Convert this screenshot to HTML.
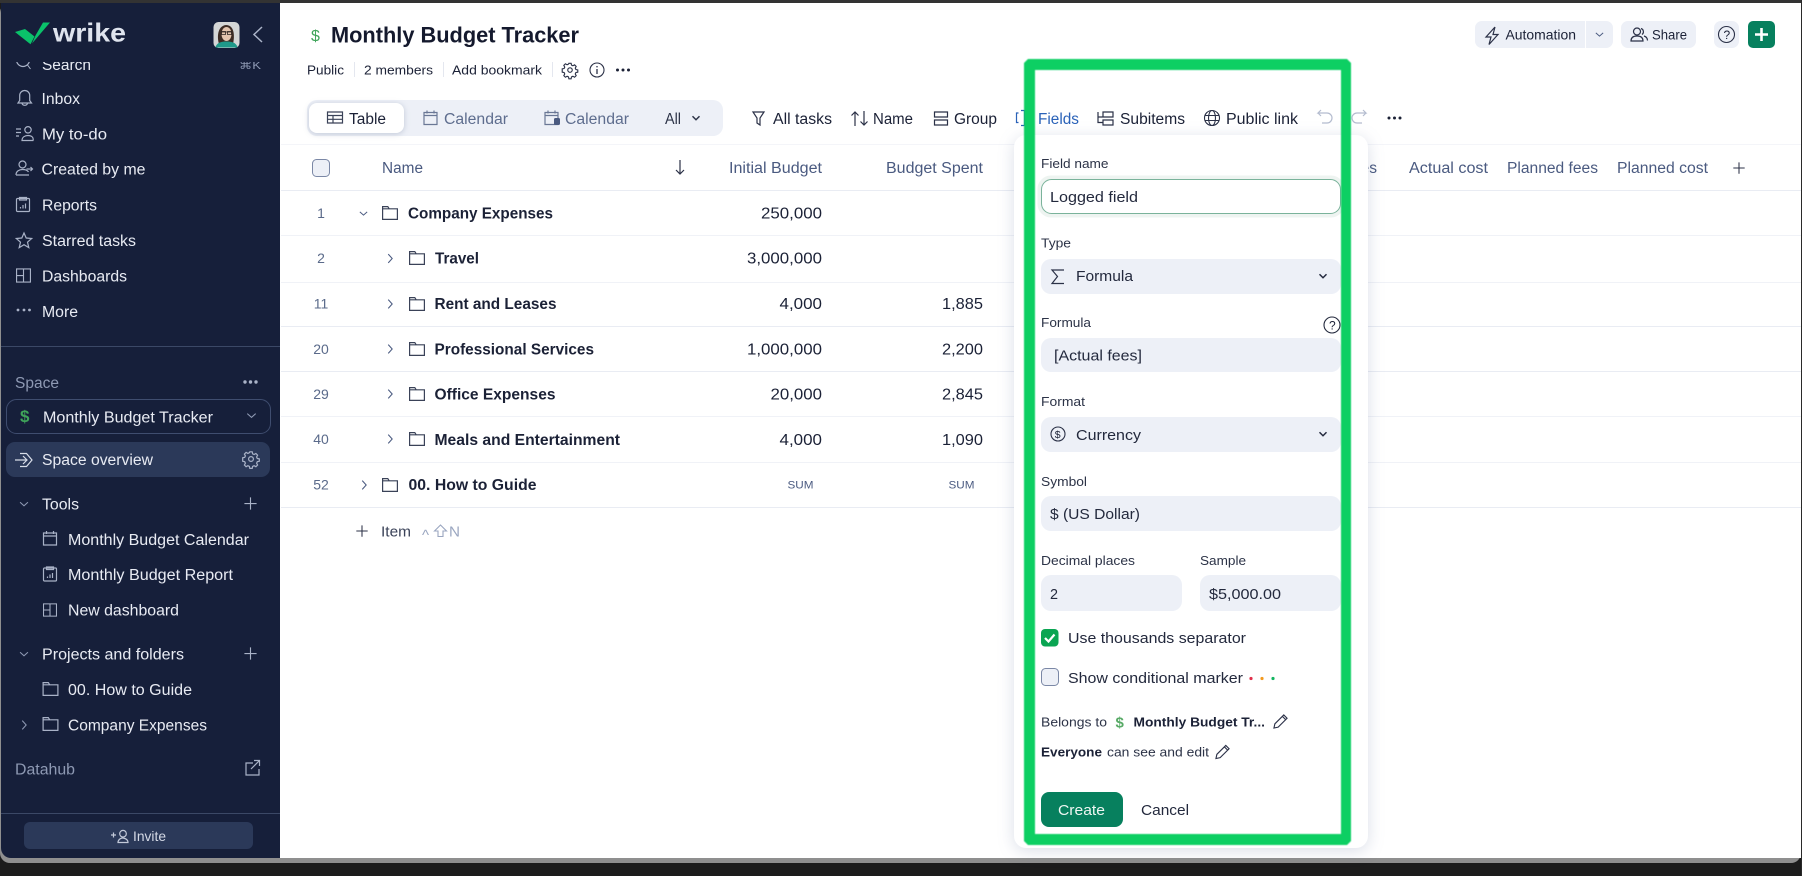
<!DOCTYPE html>
<html lang="en"><head><meta charset="utf-8"><title>Monthly Budget Tracker</title>
<style>
html,body{margin:0;padding:0;background:#1c1c1c}
svg{display:block;font-family:"Liberation Sans",sans-serif}
text{font-size:15.5px;fill:#1b2136}
.s text{fill:#e8ebf3}
.s text.m{fill:#8e99b3}
.h text{fill:#4a5a80}
.b text{font-weight:bold}
.t text{fill:#5e6d8e}
.l text{font-size:13px;fill:#2c3347}
.v text{font-size:15px;fill:#23293d}
.rn text{font-size:14px;fill:#5a6a8a}
.ic{fill:none;stroke:currentColor;stroke-width:1.2}
</style></head><body>
<svg width="1802" height="876" viewBox="0 0 1802 876" xmlns="http://www.w3.org/2000/svg">
<defs>
<symbol id="folder" viewBox="0 0 16 16" overflow="visible"><path class="ic" d="M.6 1.6h5.2l1.4 2.2h8.2v10.6H.6zM.6 3.8h6.6"/></symbol>
<symbol id="cr" viewBox="0 0 16 16"><path class="ic" d="M6 3l4.5 5L6 13"/></symbol>
<symbol id="cd" viewBox="0 0 16 16"><path class="ic" d="M3.5 6L8 10l4.5-4"/></symbol>
<symbol id="cds" viewBox="0 0 16 16"><path class="ic" style="stroke-width:1.7" d="M4 6l4 4 4-4"/></symbol>
<symbol id="plus" viewBox="0 0 16 16"><path class="ic" d="M8 1.5v13M1.5 8h13"/></symbol>
<symbol id="pencil" viewBox="0 0 16 16" overflow="visible"><path class="ic" d="M1 15l1-4.5L11.5 1l3.5 3.5L5.5 14zM10 2.5l3.500 3.500"/></symbol>
<symbol id="cal" viewBox="0 0 16 16" overflow="visible"><path class="ic" d="M1.5 2.500h13v12h-13zM1.5 5.500h13M4.500.5v3M11.500.5v3"/></symbol>
<symbol id="rep" viewBox="0 0 16 16" overflow="visible"><path class="ic" d="M2.500 2h11a1 1 0 0 1 1 1v11a1 1 0 0 1-1 1h-11a1 1 0 0 1-1-1V3a1 1 0 0 1 1-1zM4.500 1h7v2.500h-7zM5.500 12V10.500M8 12V8.500M10.500 12V7"/></symbol>
<symbol id="dash" viewBox="0 0 16 16" overflow="visible"><path class="ic" d="M.6 1h14.800v14H.6zM8 1v14M.6 8H8"/></symbol>
<symbol id="gear" viewBox="0 0 16 16" overflow="visible"><circle class="ic" cx="8" cy="8" r="2.400"/><path class="ic" d="M6.800.8h2.400l.4 2 1.500.7 1.800-1 1.700 1.700-1 1.800.7 1.500 2 .4v2.400l-2 .4-.7 1.500 1 1.800-1.700 1.700-1.800-1-1.500.7-.4 2H6.800l-.4-2-1.500-.7-1.800 1-1.700-1.700 1-1.800-.7-1.500-2-.4V6.800l2-.4.7-1.500-1-1.800 1.700-1.700 1.800 1 1.500-.7z"/></symbol>
<filter id="soft" x="-2%" y="-2%" width="104%" height="104%"><feGaussianBlur stdDeviation=".45"/></filter>
</defs>

<rect width="1802" height="876" fill="#1c1c1c"/>
<rect x="0" y="0" width="1802" height="3" fill="#333"/>
<rect x="0" y="3" width="1801" height="860" fill="#8f8f8f" rx="10"/>
<rect x="280" y="3" width="1521" height="855" fill="#fff"/>
<path d="M1 3h279v855H11a10 10 0 0 1-10-10z" fill="#161f3a"/>

<!-- SIDEBAR -->
<g class="s">
<path d="M15 32l10-3 9.500 7.500L30.500 44.300z" fill="#0ac26a"/>
<path d="M35.500 35.500L43 22.500h7L32 43.500z" fill="#0ac26a"/>
<text x="53" y="41.700" textLength="73" lengthAdjust="spacingAndGlyphs" style="font-size:26px;font-weight:bold;fill:#dfe4ee">wrike</text>
<rect x="213.500" y="22" width="26" height="26" rx="5" fill="#d4d6d6"/>
<path d="M219 44c-2-6-2-18 7-19 8 0 9 10 7 19z" fill="#3d2c24"/>
<ellipse cx="226.500" cy="34" rx="5" ry="7" fill="#e3c4ae"/>
<path d="M221 32h11M221.500 31.500h4v3h-4zM227.500 31.500h4v3h-4z" fill="none" stroke="#2c2320" stroke-width=".8"/>
<path d="M215.500 47.500c1-5 6-6 11-6s10 1 11 6z" fill="#1f9a8a"/>
<path d="M262 27l-8 7.500 8 7.500" fill="none" stroke="#aab3c8" stroke-width="1.500"/>

<svg x="0" y="62" width="280" height="20" overflow="hidden"><g transform="translate(0,-62)">
<text x="42" y="70" textLength="49" lengthAdjust="spacingAndGlyphs">Search</text>
<text x="239" y="69" textLength="22" lengthAdjust="spacingAndGlyphs" style="font-size:11px" class="m">⌘K</text>
<circle cx="23" cy="60" r="6.500" fill="none" stroke="#aab3c8" stroke-width="1.200"/><path d="M27.500 65l3 4" stroke="#aab3c8" fill="none"/>
</g></svg>

<g color="#a9b2c7">
<path class="ic" d="M18 103h13.500l-1.800-2.500v-5a5 5 0 0 0-10 0v5zM22 103.500a3 3 0 0 0 5.500 0"/>
<path class="ic" d="M16 129h5M16 132.500h5M16 136h3M22 140.500c0-3.500 3-5 6-5s6 1.500 5 5zM28 133a3.200 3.200 0 1 0 0-6.400 3.200 3.200 0 0 0 0 6.400z"/>
<path class="ic" d="M16 175c0-4 3.500-5.500 6.500-5.500s5 .8 6 2.500M16 175h13M22.500 168a3.500 3.500 0 1 0 0-7 3.500 3.500 0 0 0 0 7zM26.500 169h6m-2-2l2 2-2 2"/>
<use href="#rep" x="15" y="196.500" width="16" height="16"/>
<path class="ic" d="M24 233l2.200 5 5.500.5-4.200 3.700 1.300 5.400-4.800-2.900-4.800 2.900 1.300-5.400-4.200-3.700 5.500-.5z"/>
<use href="#dash" x="16" y="268" width="15" height="15"/>
<g fill="#a9b2c7"><circle cx="18" cy="310" r="1.400"/><circle cx="24" cy="310" r="1.400"/><circle cx="29.500" cy="310" r="1.400"/></g>
</g>
<text x="41.500" y="104" textLength="38.500" lengthAdjust="spacingAndGlyphs">Inbox</text>
<text x="42" y="139.500" textLength="65" lengthAdjust="spacingAndGlyphs">My to-do</text>
<text x="41.500" y="174.500" textLength="104" lengthAdjust="spacingAndGlyphs">Created by me</text>
<text x="42" y="210.500" textLength="55" lengthAdjust="spacingAndGlyphs">Reports</text>
<text x="42" y="246" textLength="94" lengthAdjust="spacingAndGlyphs">Starred tasks</text>
<text x="42" y="281.500" textLength="85" lengthAdjust="spacingAndGlyphs">Dashboards</text>
<text x="42" y="317" textLength="36" lengthAdjust="spacingAndGlyphs">More</text>

<rect x="1" y="346" width="279" height="1" fill="#3b4866"/>
<text class="m" x="15" y="388" textLength="44" lengthAdjust="spacingAndGlyphs">Space</text>
<g fill="#aab3c8"><circle cx="245" cy="382" r="1.700"/><circle cx="250.500" cy="382" r="1.700"/><circle cx="256" cy="382" r="1.700"/></g>

<rect x="6.500" y="399.500" width="264" height="34" rx="10" fill="none" stroke="#3f4d6f"/>
<text x="20" y="422" style="font-size:17px;font-weight:bold;fill:#3fa45a">$</text>
<text x="43" y="422.500" textLength="170" lengthAdjust="spacingAndGlyphs">Monthly Budget Tracker</text>
<use href="#cd" x="244" y="408" width="15" height="15" color="#8e99b3"/>

<rect x="6" y="442" width="264" height="35" rx="9" fill="#2b3959"/>
<path class="ic" style="color:#d8dde8" d="M15 460h12m-4-4l4 4-4 4M20 453.500h6.500L32 460l-5.500 6.500H20"/>
<text x="42" y="465" textLength="111" lengthAdjust="spacingAndGlyphs">Space overview</text>
<use href="#gear" x="243" y="451" width="16" height="16" color="#a9b2c7"/>

<use href="#cd" x="17" y="497" width="14" height="14" color="#8e99b3"/>
<text x="42" y="509.500" textLength="37" lengthAdjust="spacingAndGlyphs">Tools</text>
<use href="#plus" x="243" y="496" width="15" height="15" color="#a9b2c7"/>
<use href="#cal" x="42" y="530.500" width="16" height="16" color="#a9b2c7"/>
<text x="68" y="545" textLength="181" lengthAdjust="spacingAndGlyphs">Monthly Budget Calendar</text>
<use href="#rep" x="42" y="566" width="16" height="16" color="#a9b2c7"/>
<text x="68" y="580" textLength="165" lengthAdjust="spacingAndGlyphs">Monthly Budget Report</text>
<use href="#dash" x="43" y="603" width="14" height="14" color="#a9b2c7"/>
<text x="68" y="615.500" textLength="111" lengthAdjust="spacingAndGlyphs">New dashboard</text>
<use href="#cd" x="17" y="647" width="14" height="14" color="#8e99b3"/>
<text x="42" y="659.500" textLength="142" lengthAdjust="spacingAndGlyphs">Projects and folders</text>
<use href="#plus" x="243" y="646" width="15" height="15" color="#a9b2c7"/>
<use href="#folder" x="42.500" y="681" width="16" height="16" color="#a9b2c7"/>
<text x="68" y="695" textLength="124" lengthAdjust="spacingAndGlyphs">00. How to Guide</text>
<use href="#cr" x="17" y="718" width="14" height="14" color="#8e99b3"/>
<use href="#folder" x="42.500" y="716" width="16" height="16" color="#a9b2c7"/>
<text x="68" y="730.500" textLength="139" lengthAdjust="spacingAndGlyphs">Company Expenses</text>
<text class="m" x="15" y="774.500" textLength="60" lengthAdjust="spacingAndGlyphs">Datahub</text>
<path class="ic" style="color:#a9b2c7" d="M253 763h-7v12h13v-6M251 769l8.500-8.500m-5.500 0h5.500v5.500"/>
<rect x="1" y="813" width="279" height="1" fill="#3b4866"/>
<rect x="24" y="822" width="229" height="27" rx="6" fill="#2b3959"/>
<path class="ic" style="color:#c3cada" d="M111 835h5m-2.500-2.500v5M118 842.500c0-3 3-4.500 4.500-4.500s5.500 1 5.500 4.500zM123 837a3.300 3.300 0 1 0 0-6.600 3.300 3.300 0 0 0 0 6.600z"/>
<text x="133" y="841" textLength="33" lengthAdjust="spacingAndGlyphs" style="font-size:14px;fill:#d4d9e5">Invite</text>
</g>

<!-- HEADER -->
<text x="311" y="41" style="font-size:16px;fill:#3fa45a">$</text>
<text x="331" y="42.700" textLength="248" lengthAdjust="spacingAndGlyphs" style="font-size:22px;font-weight:bold;fill:#14192d">Monthly Budget Tracker</text>
<text x="307" y="74.500" textLength="37" lengthAdjust="spacingAndGlyphs" style="font-size:13px">Public</text>
<text x="364" y="74.500" textLength="69" lengthAdjust="spacingAndGlyphs" style="font-size:13px">2 members</text>
<text x="452" y="74.500" textLength="90" lengthAdjust="spacingAndGlyphs" style="font-size:13px">Add bookmark</text>
<g fill="#e4e7ef"><rect x="354" y="62" width="1" height="15"/><rect x="443" y="62" width="1" height="15"/><rect x="552" y="62" width="1" height="15"/></g>
<use href="#gear" x="562.500" y="62.500" width="15" height="15" color="#2b3147"/>
<circle cx="597" cy="70" r="7" fill="none" stroke="#2b3147" stroke-width="1.100"/><path d="M597 69v5M597 66v1.400" stroke="#2b3147" stroke-width="1.300"/>
<g fill="#1b2136"><circle cx="617.500" cy="70" r="1.500"/><circle cx="623" cy="70" r="1.500"/><circle cx="628.500" cy="70" r="1.500"/></g>

<rect x="1475" y="21" width="138" height="27" rx="7" fill="#edf0f7"/>
<rect x="1585" y="21" width="1" height="27" fill="#fff"/>
<path class="ic" style="color:#2b3147" d="M1495 27l-9 10h5l-2 7.500 9-10h-5l2-7.500"/>
<text x="1505.500" y="39.500" textLength="70.500" lengthAdjust="spacingAndGlyphs" style="font-size:14px">Automation</text>
<use href="#cd" x="1593" y="28" width="13" height="13" color="#4a5a80"/>
<rect x="1621" y="21" width="75" height="27" rx="7" fill="#edf0f7"/>
<path class="ic" style="color:#2b3147" d="M1631 41c0-4 3-5 6-5s6 1 6 5zM1637 35a3.500 3.500 0 1 0 0-7 3.500 3.500 0 0 0 0 7zM1641 28.500a3.400 3.400 0 0 1 1 6M1644 36c2 .6 3.500 2 3.500 4.500"/>
<text x="1652" y="39.500" textLength="35" lengthAdjust="spacingAndGlyphs" style="font-size:14px">Share</text>
<rect x="1714" y="21" width="25" height="27" rx="7" fill="#edf0f7"/>
<circle cx="1726.500" cy="34.500" r="8" fill="none" stroke="#2b3147" stroke-width="1.100"/>
<text x="1723.500" y="39" style="font-size:12px">?</text>
<rect x="1748" y="21" width="27" height="27" rx="5" fill="#07805e"/>
<path d="M1761.500 28v13M1755 34.500h13" stroke="#fff" stroke-width="2.600" fill="none"/>

<!-- TABS -->
<rect x="307" y="100" width="416" height="36" rx="10" fill="#edf0f7"/>
<rect x="309" y="103" width="95" height="30" rx="8" fill="#fff" style="filter:drop-shadow(0 1px 3px rgba(60,80,120,.25))"/>
<path class="ic" style="color:#3a4258" d="M327.500 112h15v11h-15zM327.500 115.500h15M327.500 119.300h15M333 115.500V123"/>
<text x="349" y="124" textLength="37" lengthAdjust="spacingAndGlyphs">Table</text>
<use href="#cal" x="422.500" y="110" width="16" height="16" color="#6a7795"/>
<g class="t"><text x="444" y="124" textLength="64" lengthAdjust="spacingAndGlyphs">Calendar</text></g>
<use href="#cal" x="543.500" y="110" width="16" height="16" color="#6a7795"/>
<rect x="554" y="118" width="6" height="7" rx="1.500" fill="#4a5a80"/>
<g class="t"><text x="565" y="124" textLength="64" lengthAdjust="spacingAndGlyphs">Calendar</text></g>
<text x="665" y="124" textLength="16" lengthAdjust="spacingAndGlyphs" style="fill:#2c3347">All</text>
<use href="#cds" x="689" y="111" width="14" height="14" color="#2c3347"/>

<path class="ic" style="color:#2b3147" d="M753 112h11l-4 6v7l-3-2v-5z"/>
<text x="773" y="124" textLength="59" lengthAdjust="spacingAndGlyphs">All tasks</text>
<path class="ic" style="color:#2b3147" d="M855 126v-14m-3.500 3.500l3.500-3.500 3.500 3.500M864 111v14m-3.500-3.500l3.500 3.500 3.500-3.500"/>
<text x="873" y="124" textLength="40" lengthAdjust="spacingAndGlyphs">Name</text>
<path class="ic" style="color:#2b3147" d="M934.500 112h13v5h-13zM934.500 120h13v5h-13z"/>
<text x="954" y="124" textLength="43" lengthAdjust="spacingAndGlyphs">Group</text>
<path class="ic" style="color:#2a62b8" d="M1018.500 113h-2v9.500h2M1021 110.500h3.500v15H1021"/>
<text x="1038" y="124" textLength="41" lengthAdjust="spacingAndGlyphs" style="fill:#2a62b8">Fields</text>
<path class="ic" style="color:#2b3147" d="M1098 112v5h5M1103 112h10v5h-10zM1103 120h10v5h-10zM1098 117v5.500h5"/>
<text x="1120" y="124" textLength="65" lengthAdjust="spacingAndGlyphs">Subitems</text>
<circle cx="1212" cy="118" r="7.500" fill="none" stroke="#2b3147" stroke-width="1.100"/>
<ellipse cx="1212" cy="118" rx="3.500" ry="7.500" fill="none" stroke="#2b3147" stroke-width="1.100"/>
<path d="M1204.500 115.500h15M1204.500 120.500h15" stroke="#2b3147" stroke-width="1"/>
<text x="1226" y="124" textLength="72" lengthAdjust="spacingAndGlyphs">Public link</text>
<path class="ic" style="color:#b4bccf" d="M1322 113h-4l3-3m-3 3l3 3M1318 113h9a5 5 0 0 1 0 10h-5"/>
<path class="ic" style="color:#b4bccf" d="M1362 113h4l-3-3m3 3l-3 3M1366 113h-9a5 5 0 0 0 0 10h5"/>
<g fill="#1b2136"><circle cx="1389" cy="118" r="1.500"/><circle cx="1394.500" cy="118" r="1.500"/><circle cx="1400" cy="118" r="1.500"/></g>

<!-- TABLE -->
<g fill="#e9ecf3">
<rect x="281" y="144" width="1520" height="1" fill="#f4f5f9"/>
<rect x="281" y="190" width="1520" height="1"/><rect x="281" y="235" width="1520" height="1" fill="#f0f2f7"/><rect x="281" y="282" width="1520" height="1" fill="#f0f2f7"/><rect x="281" y="326" width="1520" height="1"/><rect x="281" y="371" width="1520" height="1"/><rect x="281" y="416" width="1520" height="1" fill="#f0f2f7"/><rect x="281" y="462" width="1520" height="1" fill="#f0f2f7"/><rect x="281" y="507" width="1520" height="1"/>
</g>
<rect x="312.500" y="159.500" width="17" height="17" rx="4" fill="#edf0f7" stroke="#7b88a6"/>
<g class="h">
<text x="382" y="173" textLength="41" lengthAdjust="spacingAndGlyphs">Name</text>
<text x="729" y="173" textLength="93" lengthAdjust="spacingAndGlyphs">Initial Budget</text>
<text x="886" y="173" textLength="97" lengthAdjust="spacingAndGlyphs">Budget Spent</text>
<text x="1300" y="173" textLength="77" lengthAdjust="spacingAndGlyphs">Actual fees</text>
<text x="1409" y="173" textLength="79" lengthAdjust="spacingAndGlyphs">Actual cost</text>
<text x="1507" y="173" textLength="91" lengthAdjust="spacingAndGlyphs">Planned fees</text>
<text x="1617" y="173" textLength="91" lengthAdjust="spacingAndGlyphs">Planned cost</text>
</g>
<path class="ic" style="color:#2b3147" d="M680 160v14m-4-4l4 4 4-4"/>
<use href="#plus" x="1732" y="161" width="14" height="14" color="#2b3147"/>

<g class="rn" text-anchor="middle">
<text x="321" y="218">1</text>
<text x="321" y="263">2</text>
<text x="321" y="308.500">11</text>
<text x="321" y="354">20</text>
<text x="321" y="399">29</text>
<text x="321" y="444">40</text>
<text x="321" y="489.500">52</text>
</g>

<use href="#cd" x="357" y="207" width="13" height="13" color="#4a5a80"/>
<g color="#4a5a80">
<use href="#cr" x="383" y="251.500" width="14" height="14"/>
<use href="#cr" x="383" y="297" width="14" height="14"/>
<use href="#cr" x="383" y="342" width="14" height="14"/>
<use href="#cr" x="383" y="387" width="14" height="14"/>
<use href="#cr" x="383" y="432" width="14" height="14"/>
<use href="#cr" x="357" y="478" width="14" height="14"/>
</g>
<g color="#3a4258">
<use href="#folder" x="382" y="205" width="16" height="16"/>
<use href="#folder" x="409" y="250" width="16" height="16"/>
<use href="#folder" x="409" y="296" width="16" height="16"/>
<use href="#folder" x="409" y="341" width="16" height="16"/>
<use href="#folder" x="409" y="386" width="16" height="16"/>
<use href="#folder" x="409" y="431" width="16" height="16"/>
<use href="#folder" x="382" y="477" width="16" height="16"/>
</g>
<g class="b">
<text x="408" y="218.500" textLength="145" lengthAdjust="spacingAndGlyphs">Company Expenses</text>
<text x="435" y="263.500" textLength="44" lengthAdjust="spacingAndGlyphs">Travel</text>
<text x="434.500" y="309" textLength="122" lengthAdjust="spacingAndGlyphs">Rent and Leases</text>
<text x="434.500" y="354.500" textLength="159.500" lengthAdjust="spacingAndGlyphs">Professional Services</text>
<text x="434.500" y="399.500" textLength="121" lengthAdjust="spacingAndGlyphs">Office Expenses</text>
<text x="434.500" y="445" textLength="185.500" lengthAdjust="spacingAndGlyphs">Meals and Entertainment</text>
<text x="408.500" y="490" textLength="128" lengthAdjust="spacingAndGlyphs">00. How to Guide</text>
</g>
<g>
<text x="761" y="218.500" textLength="61" lengthAdjust="spacingAndGlyphs">250,000</text>
<text x="747" y="263.500" textLength="75" lengthAdjust="spacingAndGlyphs">3,000,000</text>
<text x="779.500" y="309" textLength="42.500" lengthAdjust="spacingAndGlyphs">4,000</text>
<text x="747" y="354.500" textLength="75" lengthAdjust="spacingAndGlyphs">1,000,000</text>
<text x="770.500" y="399.500" textLength="51.500" lengthAdjust="spacingAndGlyphs">20,000</text>
<text x="779.500" y="445" textLength="42.500" lengthAdjust="spacingAndGlyphs">4,000</text>
<text x="942" y="309" textLength="41" lengthAdjust="spacingAndGlyphs">1,885</text>
<text x="942" y="354.500" textLength="41" lengthAdjust="spacingAndGlyphs">2,200</text>
<text x="942" y="399.500" textLength="41" lengthAdjust="spacingAndGlyphs">2,845</text>
<text x="942" y="445" textLength="41" lengthAdjust="spacingAndGlyphs">1,090</text>
</g>
<g class="h">
<text x="787.500" y="488.500" textLength="26" lengthAdjust="spacingAndGlyphs" style="font-size:11px">SUM</text>
<text x="948.500" y="488.500" textLength="26" lengthAdjust="spacingAndGlyphs" style="font-size:11px">SUM</text>
</g>
<use href="#plus" x="355" y="524" width="14" height="14" color="#2b3147"/>
<text x="381" y="536.500" textLength="30" lengthAdjust="spacingAndGlyphs" style="font-size:15px;fill:#3a4258">Item</text>
<text x="422" y="540" style="font-size:15px;fill:#9aa6c0">^</text>
<path d="M434.500 531l6-6 6 6h-3.500v5.500h-5V531z" fill="none" stroke="#9aa6c0" stroke-width="1.100"/>
<text x="449" y="536.500" textLength="11" lengthAdjust="spacingAndGlyphs" style="font-size:15px;fill:#9aa6c0">N</text>

<!-- POPUP -->
<rect x="1014" y="135" width="354" height="713" rx="12" fill="#fff" style="filter:drop-shadow(0 3px 8px rgba(70,90,140,.2))"/>
<g fill="#edf0f7">
<rect x="1041" y="259" width="300" height="35" rx="10"/>
<rect x="1041" y="338" width="300" height="34" rx="10"/>
<rect x="1041" y="417" width="300" height="35" rx="10"/>
<rect x="1041" y="496" width="300" height="35" rx="10"/>
<rect x="1041" y="575" width="141" height="36" rx="10"/>
<rect x="1200" y="575" width="141" height="36" rx="10"/>
</g>
<rect x="1041" y="179" width="300" height="35" rx="10" fill="#fff" stroke="#eef4f1" stroke-width="7"/>
<rect x="1041.500" y="179.500" width="299" height="34" rx="10" fill="#fff" stroke="#7ab39b"/>
<g class="l">
<text x="1041" y="168" textLength="67.500" lengthAdjust="spacingAndGlyphs">Field name</text>
<text x="1041" y="247.500" textLength="30" lengthAdjust="spacingAndGlyphs">Type</text>
<text x="1041" y="327" textLength="50" lengthAdjust="spacingAndGlyphs">Formula</text>
<text x="1041" y="406" textLength="44" lengthAdjust="spacingAndGlyphs">Format</text>
<text x="1041" y="486" textLength="46" lengthAdjust="spacingAndGlyphs">Symbol</text>
<text x="1041" y="565" textLength="94" lengthAdjust="spacingAndGlyphs">Decimal places</text>
<text x="1200" y="565" textLength="46" lengthAdjust="spacingAndGlyphs">Sample</text>
<text x="1041" y="726.500" textLength="66" lengthAdjust="spacingAndGlyphs">Belongs to</text>
<text x="1133.500" y="726.500" textLength="131.500" lengthAdjust="spacingAndGlyphs" style="font-weight:bold;fill:#1b2136">Monthly Budget Tr...</text>
<text x="1041" y="756.500" textLength="61" lengthAdjust="spacingAndGlyphs" style="font-weight:bold;fill:#1b2136">Everyone</text>
<text x="1107" y="756.500" textLength="102" lengthAdjust="spacingAndGlyphs">can see and edit</text>
</g>
<g class="v">
<text x="1050" y="202" textLength="88" lengthAdjust="spacingAndGlyphs">Logged field</text>
<text x="1076" y="281" textLength="57" lengthAdjust="spacingAndGlyphs">Formula</text>
<text x="1054" y="360.500" textLength="88" lengthAdjust="spacingAndGlyphs">[Actual fees]</text>
<text x="1076" y="440" textLength="65" lengthAdjust="spacingAndGlyphs">Currency</text>
<text x="1050" y="519" textLength="90" lengthAdjust="spacingAndGlyphs">$ (US Dollar)</text>
<text x="1050" y="599" textLength="8" lengthAdjust="spacingAndGlyphs">2</text>
<text x="1209" y="599" textLength="72" lengthAdjust="spacingAndGlyphs">$5,000.00</text>
<text x="1068" y="643" textLength="178" lengthAdjust="spacingAndGlyphs">Use thousands separator</text>
<text x="1068" y="683" textLength="175" lengthAdjust="spacingAndGlyphs">Show conditional marker</text>
<text x="1141" y="815" textLength="48" lengthAdjust="spacingAndGlyphs">Cancel</text>
</g>
<path class="ic" style="color:#2b3147" d="M1064 270h-12l5.500 6.500-5.500 7h12"/>
<use href="#cds" x="1316" y="269" width="14" height="14" color="#23293d"/>
<circle cx="1332" cy="325" r="8" fill="none" stroke="#23293d" stroke-width="1.100"/>
<text x="1329" y="329.500" style="font-size:12px">?</text>
<circle cx="1058" cy="434" r="7" fill="none" stroke="#2b3147" stroke-width="1.100"/>
<text x="1054.800" y="438" style="font-size:10.500px">$</text>
<use href="#cds" x="1316" y="427" width="14" height="14" color="#23293d"/>
<rect x="1041" y="629" width="17.500" height="17.500" rx="4" fill="#0aa552"/>
<path d="M1045 638l3.500 3.500 6-7" fill="none" stroke="#fff" stroke-width="2.200"/>
<rect x="1041.500" y="668.500" width="17" height="17" rx="4" fill="#edf0f7" stroke="#7b88a6"/>
<circle cx="1251" cy="678.500" r="1.600" fill="#e0304a"/><circle cx="1262" cy="678.500" r="1.600" fill="#f39a1f"/><circle cx="1273" cy="678.500" r="1.600" fill="#12b560"/>
<text x="1115.500" y="727.500" style="font-size:15px;font-weight:bold;fill:#58aa66">$</text>
<use href="#pencil" x="1273" y="714" width="15" height="15" color="#2b3147"/>
<use href="#pencil" x="1215" y="744.500" width="15" height="15" color="#2b3147"/>
<rect x="1041" y="792" width="82" height="35" rx="8" fill="#07805e"/>
<text x="1058" y="815" textLength="47" lengthAdjust="spacingAndGlyphs" style="font-size:15px;fill:#eef6f2">Create</text>

<!-- GREEN HIGHLIGHT -->
<path filter="url(#soft)" fill-rule="evenodd" fill="#09cf63" d="M1028 59H1347L1351 63V841L1347 845H1028L1024 841V63ZM1035 70V834H1341V70Z"/>

<rect x="1801" y="0" width="1" height="876" fill="#2a2a2a"/>
</svg>
</body></html>
